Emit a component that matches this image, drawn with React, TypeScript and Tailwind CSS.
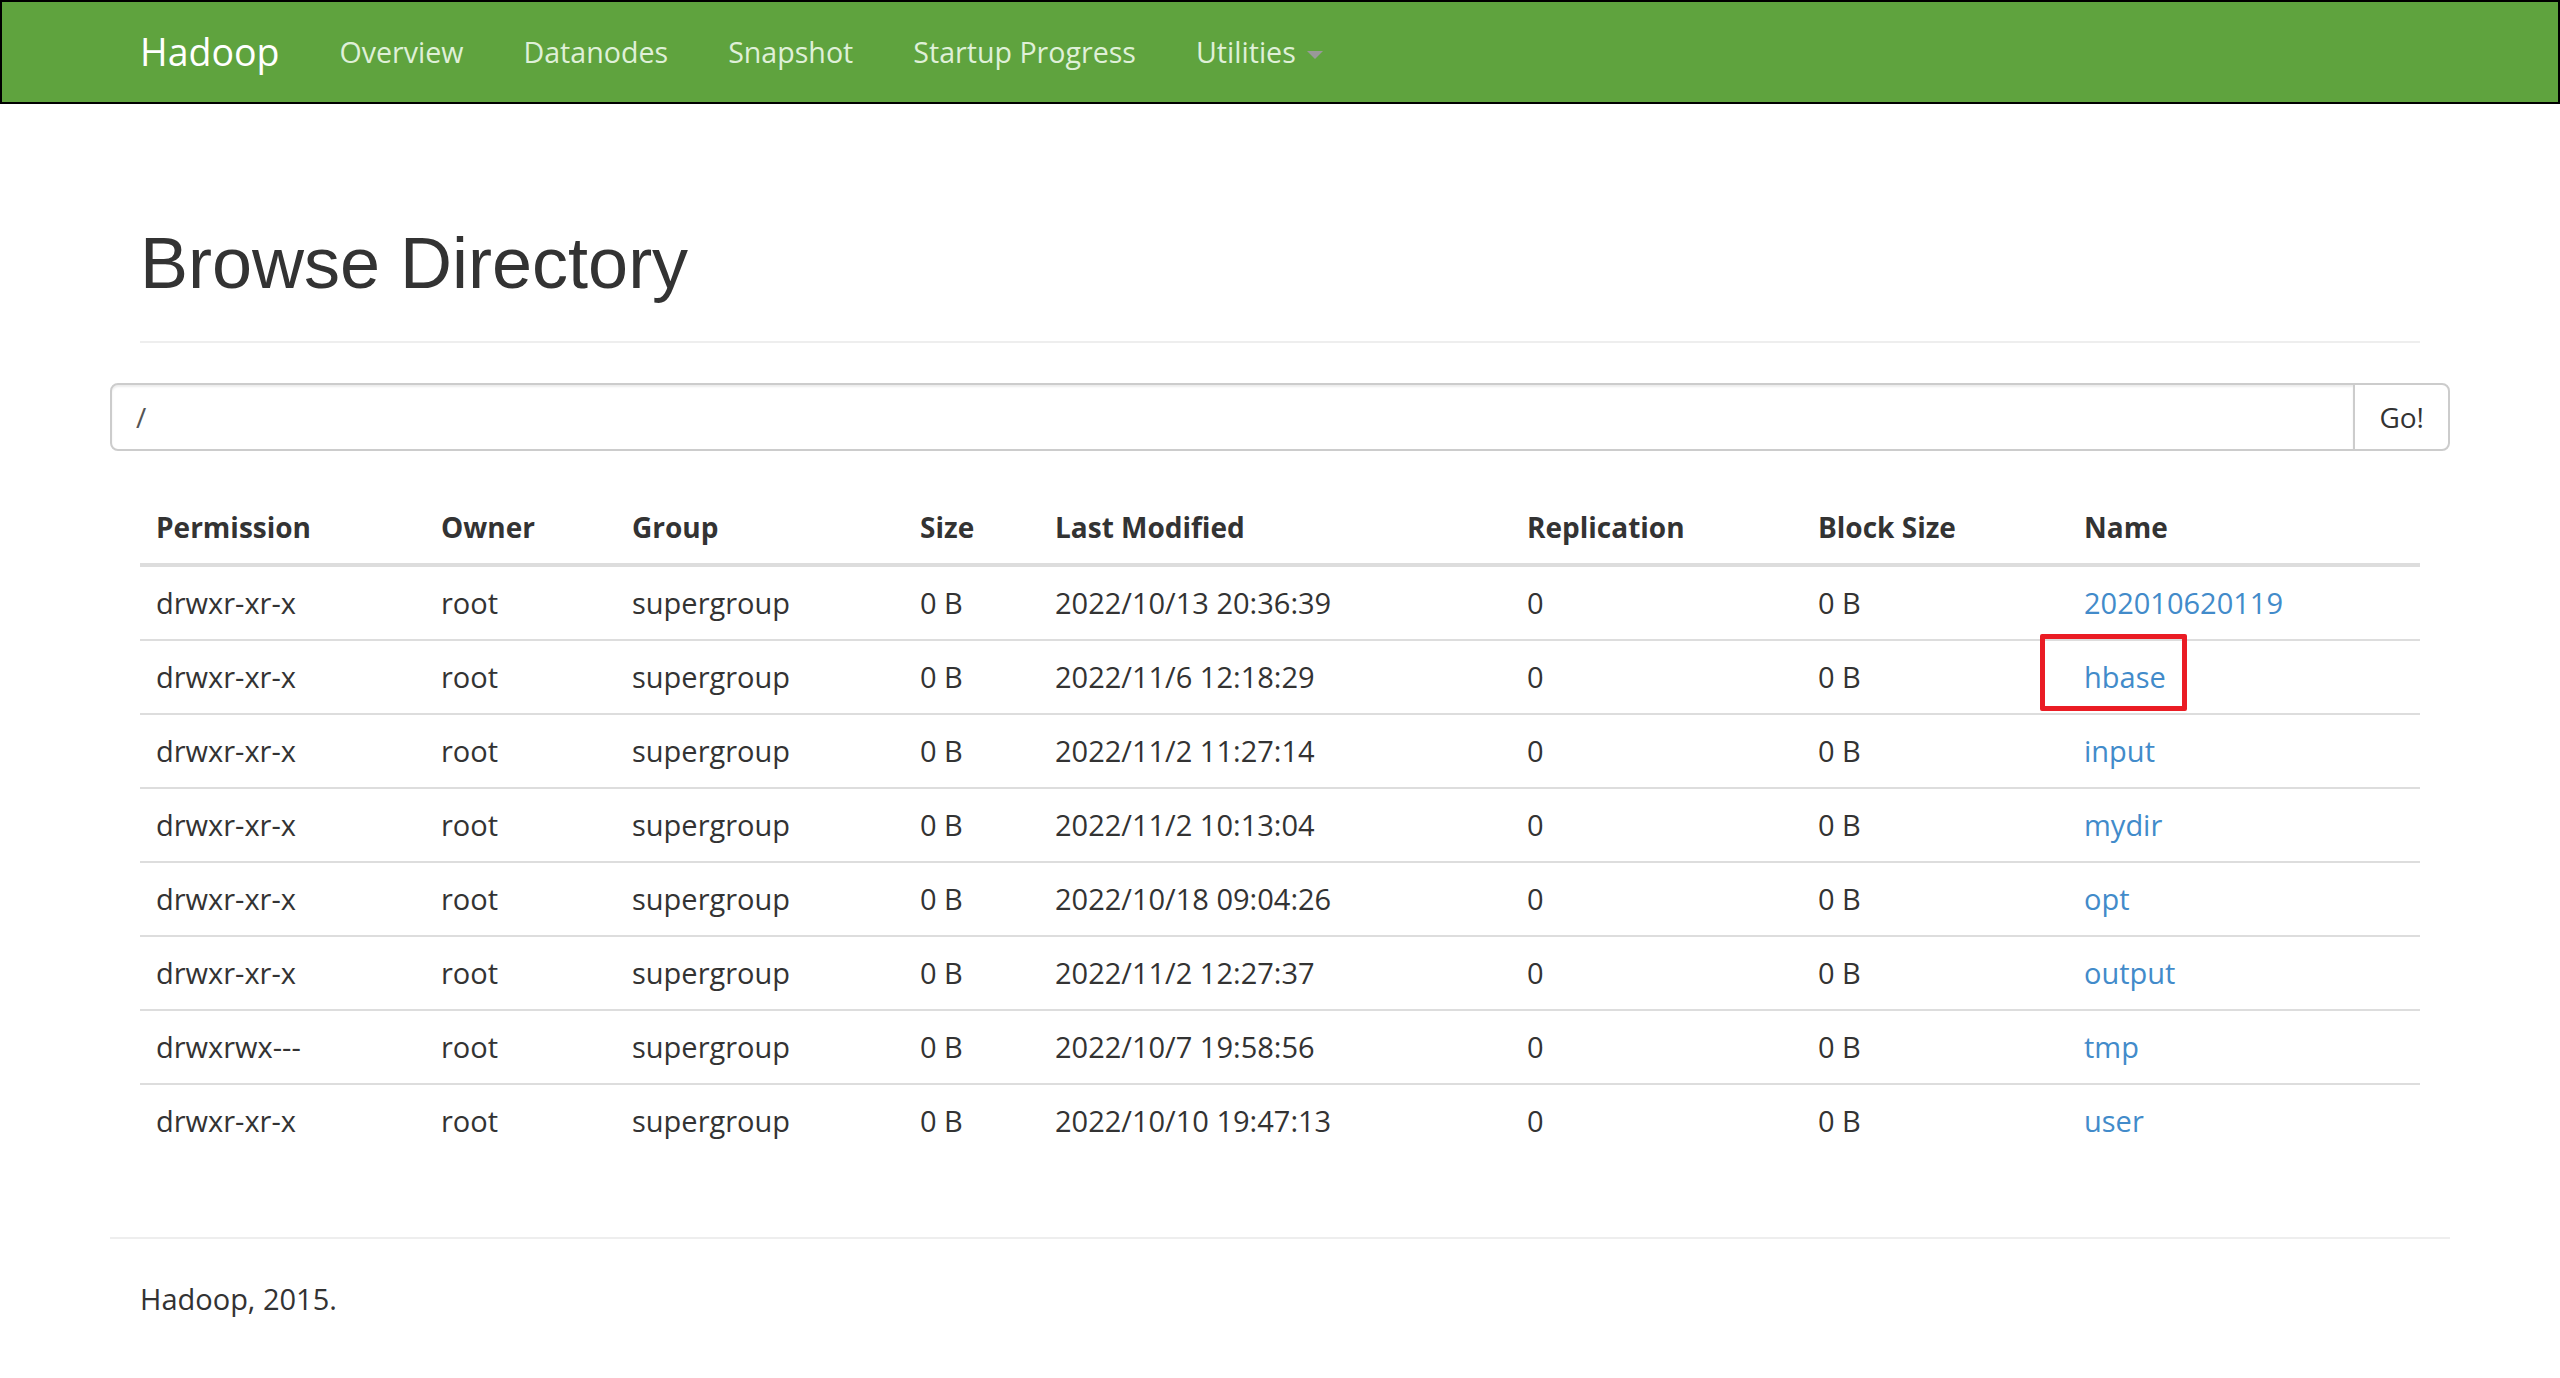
import { ChangeEvent, useState } from 'react'

type Entry = {
  permission: string
  owner: string
  group: string
  size: string
  modified: string
  replication: string
  blockSize: string
  name: string
}

const ENTRIES: Entry[] = [
  { permission: 'drwxr-xr-x', owner: 'root', group: 'supergroup', size: '0 B', modified: '2022/10/13 20:36:39', replication: '0', blockSize: '0 B', name: '202010620119' },
  { permission: 'drwxr-xr-x', owner: 'root', group: 'supergroup', size: '0 B', modified: '2022/11/6 12:18:29', replication: '0', blockSize: '0 B', name: 'hbase' },
  { permission: 'drwxr-xr-x', owner: 'root', group: 'supergroup', size: '0 B', modified: '2022/11/2 11:27:14', replication: '0', blockSize: '0 B', name: 'input' },
  { permission: 'drwxr-xr-x', owner: 'root', group: 'supergroup', size: '0 B', modified: '2022/11/2 10:13:04', replication: '0', blockSize: '0 B', name: 'mydir' },
  { permission: 'drwxr-xr-x', owner: 'root', group: 'supergroup', size: '0 B', modified: '2022/10/18 09:04:26', replication: '0', blockSize: '0 B', name: 'opt' },
  { permission: 'drwxr-xr-x', owner: 'root', group: 'supergroup', size: '0 B', modified: '2022/11/2 12:27:37', replication: '0', blockSize: '0 B', name: 'output' },
  { permission: 'drwxrwx---', owner: 'root', group: 'supergroup', size: '0 B', modified: '2022/10/7 19:58:56', replication: '0', blockSize: '0 B', name: 'tmp' },
  { permission: 'drwxr-xr-x', owner: 'root', group: 'supergroup', size: '0 B', modified: '2022/10/10 19:47:13', replication: '0', blockSize: '0 B', name: 'user' },
]

const NAV_LINKS = ['Overview', 'Datanodes', 'Snapshot', 'Startup Progress']

function Navbar() {
  return (
    <nav className="h-[104px] border-2 border-black bg-[#5fa33e]">
      <div className="mx-auto flex w-[2340px] px-[30px]">
        <a className="-ml-[30px] px-[30px] py-[30px] text-[37.5px] leading-[40px] text-white">Hadoop</a>
        <ul className="flex">
          {NAV_LINKS.map(l => (
            <li key={l}>
              <a className="block px-[30px] py-[30px] text-[28.6px] leading-[40px] text-[#dff0d8]">{l}</a>
            </li>
          ))}
          <li>
            <a className="block px-[30px] py-[30px] text-[28.6px] leading-[40px] text-[#dff0d8]">
              Utilities{' '}
              <span className="ml-[4px] inline-block h-0 w-0 border-x-[8px] border-t-[8px] border-x-transparent border-t-[#999] align-middle" />
            </a>
          </li>
        </ul>
      </div>
    </nav>
  )
}

export default function App() {
  const [path, setPath] = useState('/')

  return (
    <div className="min-h-screen bg-white font-['Open_Sans','Noto_Sans',sans-serif] text-[29px] leading-[40px] text-[#333]">
      <Navbar />

      <div className="mx-auto w-[2340px] px-[30px]">
        {/* Page header */}
        <div className="mt-[120px] mb-[40px] border-b-2 border-[#eee] pb-[38px]">
          <h1 className="font-['Liberation_Sans',Arial,sans-serif] text-[72px] leading-[79px] font-normal">
            Browse Directory
          </h1>
        </div>

        {/* Path form */}
        <div className="-mx-[30px]">
          <div className="flex h-[68px]">
            <input
              value={path}
              onChange={(e: ChangeEvent<HTMLInputElement>) => setPath(e.target.value)}
              className="h-full min-w-0 flex-1 rounded-l-[8px] border-2 border-[#ccc] px-[24px] text-[28px] text-[#555] outline-none shadow-[inset_0_2px_2px_rgba(0,0,0,0.075)]"
            />
            <button className="-ml-[2px] h-full rounded-r-[8px] border-2 border-[#ccc] bg-white px-[24px] text-[28px] text-[#333]">
              Go!
            </button>
          </div>
        </div>

        {/* Listing */}
        <table className="mt-[40px] mb-[40px] w-full table-fixed border-collapse">
          <colgroup>
            <col className="w-[285px]" />
            <col className="w-[191px]" />
            <col className="w-[288px]" />
            <col className="w-[135px]" />
            <col className="w-[472px]" />
            <col className="w-[291px]" />
            <col className="w-[266px]" />
            <col />
          </colgroup>
          <thead>
            <tr>
              {['Permission', 'Owner', 'Group', 'Size', 'Last Modified', 'Replication', 'Block Size', 'Name'].map(h => (
                <th key={h} className="border-b-4 border-[#ddd] p-[16px] text-left align-bottom text-[28px] font-bold">
                  {h}
                </th>
              ))}
            </tr>
          </thead>
          <tbody>
            {ENTRIES.map((e, i) => (
              <tr key={e.name} className={i > 0 ? 'border-t-2 border-[#ddd]' : ''}>
                <td className="p-[16px]">{e.permission}</td>
                <td className="p-[16px]">{e.owner}</td>
                <td className="p-[16px]">{e.group}</td>
                <td className="p-[16px]">{e.size}</td>
                <td className="p-[16px]">{e.modified}</td>
                <td className="p-[16px]">{e.replication}</td>
                <td className="p-[16px]">{e.blockSize}</td>
                <td className="relative p-[16px]">
                  <a className="text-[#428bca]">{e.name}</a>
                  {e.name === 'hbase' && (
                    <span className="pointer-events-none absolute -top-[7px] left-[-28px] h-[77px] w-[147px] rounded-[2px] border-[5px] border-[#ea1c24]" />
                  )}
                </td>
              </tr>
            ))}
          </tbody>
        </table>

        {/* Footer */}
        <div className="-mx-[30px] flow-root">
          <hr className="my-[40px] border-0 border-t-2 border-[#eee]" />
          <p className="mb-[20px] px-[30px]">Hadoop, 2015.</p>
        </div>
      </div>
    </div>
  )
}
